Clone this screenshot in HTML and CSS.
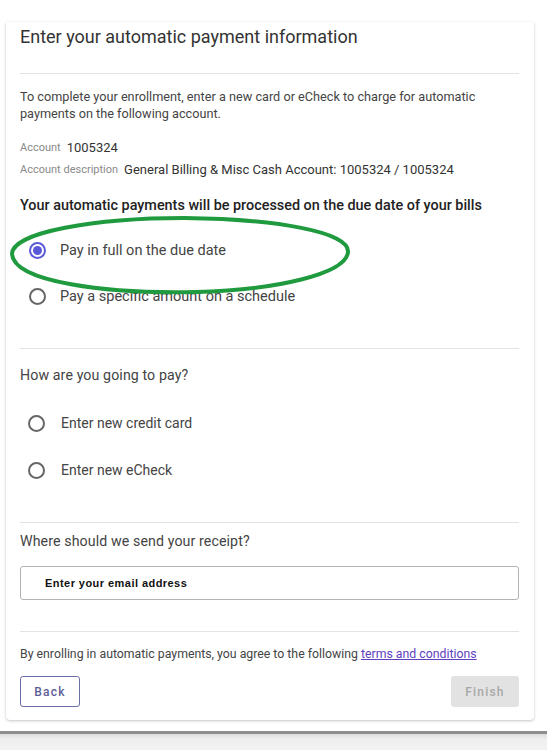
FILE: index.html
```html
<!DOCTYPE html>
<html>
<head>
<meta charset="utf-8">
<link rel="stylesheet" href="styles.css">
</head>
<body>
<div class="page">
  <div class="card">
    <h1 class="title">Enter your automatic payment information</h1>
    <hr class="divider first">
    <p class="intro">To complete your enrollment, enter a new card or eCheck to charge for automatic payments on the following account.</p>
    <div class="meta">
      <div class="meta-row"><span class="meta-label">Account</span><span class="meta-value">1005324</span></div>
      <div class="meta-row"><span class="meta-label">Account description</span><span class="meta-value">General Billing &amp; Misc Cash Account: 1005324 / 1005324</span></div>
    </div>
    <div class="schedule">
      <h2 class="strong-heading">Your automatic payments will be processed on the due date of your bills</h2>
      <div class="options first-options">
        <label class="option"><span class="radio checked"></span><span>Pay in full on the due date</span></label>
        <label class="option"><span class="radio"></span><span>Pay a specific amount on a schedule</span></label>
      </div>
      <svg class="highlight" width="352" height="84" viewBox="0 0 352 84">
        <path d="M6 40 C 6 18, 90 4, 178 4 C 270 5, 344 18, 342 38 C 340 60, 270 76, 190 78 C 100 80, 8 68, 6 40 Z" fill="none" stroke="#1f9a3e" stroke-width="4"/>
      </svg>
    </div>
    <hr class="divider d2">
    <h3 class="section-heading">How are you going to pay?</h3>
    <div class="options second-options">
      <label class="option wide"><span class="radio"></span><span>Enter new credit card</span></label>
      <label class="option wide"><span class="radio"></span><span>Enter new eCheck</span></label>
    </div>
    <hr class="divider d3">
    <h3 class="section-heading receipt">Where should we send your receipt?</h3>
    <div class="input"><span class="placeholder">Enter your email address</span></div>
    <hr class="divider d4">
    <p class="terms">By enrolling in automatic payments, you agree to the following <a href="#">terms and conditions</a></p>
    <div class="actions">
      <button class="btn back">Back</button>
      <button class="btn finish">Finish</button>
    </div>
  </div>
  <div class="bottom-bar"></div>
</div>
</body>
</html>
```

FILE: styles.css
```css
* { box-sizing: border-box; }
html, body { margin: 0; padding: 0; background: #ffffff; overflow: hidden; }
body { font-family: Roboto, "Noto Sans", "Liberation Sans", sans-serif; color: #3a3a3a; }
.page { width: 547px; height: 750px; display: flex; flex-direction: column; }
.card {
  position: relative;
  margin: 22px 13px 0 6px;
  padding: 3px 15px 13px 14px;
  background: #fff;
  border-radius: 0 0 4px 4px;
  box-shadow: 0 1px 3px rgba(0,0,0,0.22), 0 0 1px rgba(0,0,0,0.08);
  display: flex;
  flex-direction: column;
}
.title { margin: 0; font-size: 18px; line-height: 24px; font-weight: 400; color: #333; }
.divider { border: 0; border-top: 1px solid #e3e3e3; margin: 0; height: 0; }
.divider.first { margin-top: 24px; }
.intro { margin: 14px 0 0; font-size: 12.7px; line-height: 17px; color: #444; }
.meta { margin-top: 14px; display: flex; flex-direction: column; }
.meta-row { height: 22px; display: flex; align-items: center; gap: 6px; }
.meta-label { font-size: 11px; color: #8a8a8a; }
.meta-value { font-size: 13px; color: #333; }
.schedule { position: relative; margin-top: 16px; }
.strong-heading { margin: 0; font-size: 14.4px; line-height: 20px; font-weight: 500; color: #222; }
.options { display: flex; flex-direction: column; gap: 6px; }
.first-options { margin-top: 14px; }
.option { height: 40px; display: flex; align-items: center; gap: 14px; padding-left: 9px; font-size: 14.5px; color: #444; }
.option.wide { gap: 16px; padding-left: 8px; font-size: 14px; }
.second-options { margin-top: 18px; gap: 7px; }
.radio { width: 17px; height: 17px; border: 2px solid #666; border-radius: 50%; display: flex; align-items: center; justify-content: center; flex: none; }
.radio.checked { border-color: #5a5ad8; }
.radio.checked::after { content: ""; width: 9px; height: 9px; border-radius: 50%; background: #5a5ad8; }
.highlight { position: absolute; left: -14px; top: 18px; pointer-events: none; }
.divider.d2 { margin-top: 32px; }
.section-heading { margin: 16px 0 0; font-size: 14.2px; line-height: 20px; font-weight: 400; color: #444; letter-spacing: 0.1px; }
.divider.d3 { margin-top: 32px; }
.section-heading.receipt { margin-top: 8px; }
.input { margin-top: 15px; height: 34px; border: 1px solid #b3b3b3; border-radius: 3px; display: flex; align-items: center; padding-left: 24px; }
.placeholder { font-family: "Liberation Sans", Arial, sans-serif; font-size: 11px; font-weight: 700; color: #111; letter-spacing: 0.45px; }
.divider.d4 { margin-top: 31px; }
.terms { margin: 13px 0 0; font-size: 12.3px; line-height: 18px; color: #444; }
.terms a { color: #5d3fc0; text-decoration: underline; }
.actions { margin-top: 13px; display: flex; justify-content: space-between; }
.btn { height: 31px; border-radius: 3px; font-family: Roboto, sans-serif; font-size: 12px; font-weight: 500; letter-spacing: 1.2px; padding: 0; }
.btn.back { width: 60px; background: #fff; border: 1px solid #6e6ea6; color: #5d5d98; }
.btn.finish { width: 68px; background: #e2e2e2; border: 0; color: #a8a8a8; }
.bottom-bar { margin-top: 11px; flex: 1; border-top: 3px solid #8e8e8e; background: linear-gradient(#dcdcdc, #efefef 5px, #f2f2f2); }
```
